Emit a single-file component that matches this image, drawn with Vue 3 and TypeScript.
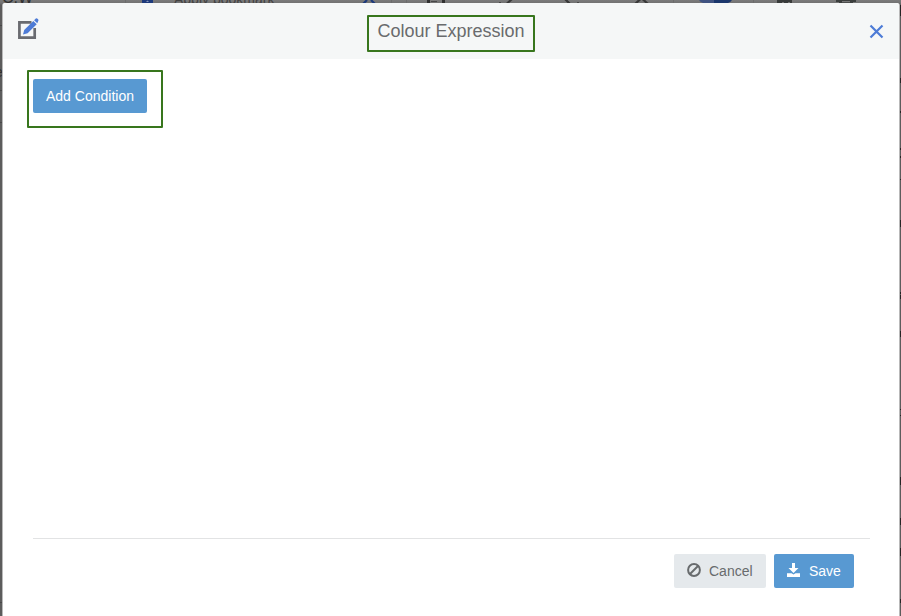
<script setup lang="ts">
interface Mark { y: number; h: number }

const title: string = 'Colour Expression'
const edgeMarks: Mark[] = [
  { y: 5, h: 11 }, { y: 78, h: 5 }, { y: 111, h: 2 }, { y: 148, h: 2 }, { y: 156, h: 2 },
  { y: 179, h: 1 }, { y: 220, h: 7 }, { y: 292, h: 2 }, { y: 295, h: 4 }, { y: 331, h: 6 },
  { y: 409, h: 1 }, { y: 415, h: 1 }, { y: 477, h: 8 }, { y: 518, h: 7 }, { y: 548, h: 8 },
  { y: 599, h: 4 },
]
</script>

<template>
  <div class="screen">
    <div class="behind">
      <svg class="behind-art" width="901" height="616" viewBox="0 0 901 616" fill="none">
        <path d="M125.5 0V3M391.5 0V3M406.5 0V3M673.5 0V3M753.5 0V3" stroke="#6c6c6c" />
        <path d="M142 0H153V3H142Z" fill="#1d3a7c" />
        <path d="M146 2L147.500 0.500L149 2Z" fill="#8794b5" />
        <path d="M363 4L367 0M375 4L371 0" stroke="#1d3a7c" stroke-width="2.200" />
        <path d="M427 0H430V3H427ZM442 0H445V3H442Z" fill="#303030" />
        <path d="M431 1.500H437" stroke="#484848" />
        <path d="M507 3.500L512 -1M565 -1L570 4M635 4L640.500 -1M648 4L642.500 -1" stroke="#383838" stroke-width="2.200" />
        <path d="M499 2.500H501M577 2.500H579" stroke="#484848" />
        <path d="M699 0H714V3H703Q700 2 699 0Z" fill="#405381" />
        <path d="M714 0H732Q731 2 728 3H714Z" fill="#1b376c" />
        <path d="M777 0H792V3H777Z" fill="#383b3a" />
        <path d="M782 2.500H784M788 2.500H790" stroke="#737373" />
        <path d="M836 0H856V2H853V3H850V1H842V3H839V2H836Z" fill="#3b3e3d" />
        <path d="M842 2.500H850" stroke="#4c4e4d" />
        <path d="M0 25.500H2M0 90.500H2M0 122.500H2M0 602.500H2" stroke="#484848" />
        <rect v-for="mark in edgeMarks" :key="mark.y" x="900" :y="mark.y" width="1" :height="mark.h" fill="#252525" />
      </svg>
      <span class="customer">C.W</span>
      <span class="bookmark">Apply bookmark</span>
      <span class="row-label">e</span>
    </div>

    <section class="modal" role="dialog">
      <header class="modal-head">
        <svg class="edit-icon" width="22" height="23" viewBox="0 0 22 23" fill="none">
          <path d="M13.500 5.300H1.400V20.700H16.700V11" stroke="#696b70" stroke-width="2.700" />
          <path d="M5 17.500L6.200 13L15.300 4L18.700 7.300L9.600 16.300Z" fill="#4d7bd6" />
          <path d="M16.100 3.200L17.800 1.600Q18.600 1 19.500 1.700L20.100 2.300Q20.900 3.200 20.200 4.100L19.300 6.300Z" fill="#4d7bd6" />
        </svg>
        <h1 class="title">{{ title }}</h1>
        <button class="close" type="button">
          <svg width="15" height="15" viewBox="0 0 15 15" fill="none">
            <path d="M1.500 1.500L13.500 13.500M13.500 1.500L1.500 13.500" stroke="#4d7bd6" stroke-width="2.200" />
          </svg>
        </button>
      </header>
      <main class="modal-body">
        <div class="condition-box">
          <button class="btn primary add" type="button">Add Condition</button>
        </div>
      </main>
      <footer class="modal-foot">
        <button class="btn cancel" type="button">
          <svg width="14" height="14" viewBox="0 0 14 14" fill="none">
            <circle cx="7" cy="7" r="5.900" stroke="#686b6d" stroke-width="2" />
            <path d="M3 11L11 3" stroke="#686b6d" stroke-width="2" />
          </svg>
          <span>Cancel</span>
        </button>
        <button class="btn primary save" type="button">
          <svg width="14" height="14" viewBox="0 0 14 14" fill="#fff">
            <path d="M5 0H8V5H11.500L6.500 10L1.500 5H5ZM0 10.200H4.500L6.500 11.500L8.500 10.200H13V14H0Z" />
          </svg>
          <span>Save</span>
        </button>
      </footer>
    </section>
  </div>
</template>

<style>
body {
  overflow: hidden;
}
</style>

<style scoped>
.screen {
  position: relative;
  box-sizing: border-box;
  height: 616px;
  padding: 3px 1px 0 2px;
  overflow: hidden;
  background: #767676;
  font-family: "Liberation Sans", Arial, sans-serif;
}
.behind {
  position: absolute;
  inset: 0;
  background: linear-gradient(#7b7b7b 0, #727272 3px, #5c5c5c 5px, #5c5c5c 100%);
  color: #303030;
}
.behind-art {
  display: block;
}
.behind span {
  position: absolute;
  white-space: nowrap;
}
.behind .customer {
  left: 2px;
  top: -11px;
  font-size: 16px;
  line-height: 18px;
}
.behind .bookmark {
  left: 174px;
  top: -9px;
  font-size: 14px;
  line-height: 16px;
  color: #424242;
}
.behind .row-label {
  left: -5px;
  top: 64px;
  font-size: 14px;
  line-height: 16px;
}
.modal {
  position: relative;
  display: flex;
  flex-direction: column;
  box-sizing: border-box;
  height: 613px;
  border: solid #b9b9b9;
  border-width: 0 1px;
  border-radius: 3px 3px 0 0;
  background: #fff;
  overflow: hidden;
}
.modal-head {
  display: grid;
  grid-template-columns: 1fr auto 1fr;
  align-items: start;
  box-sizing: border-box;
  height: 56px;
  padding: 12px 15px 0;
  background: #f5f7f7;
}
.edit-icon {
  margin-top: 2px;
}
.title {
  box-sizing: border-box;
  width: 168px;
  height: 37px;
  margin: 0;
  border: 2px solid #38761d;
  border-radius: 1px;
  color: #696b6d;
  font-size: 18px;
  line-height: 28px;
  font-weight: normal;
  text-align: center;
  white-space: nowrap;
}
.close {
  display: flex;
  justify-self: end;
  margin: 9px 0 0;
  padding: 0;
  border: 0;
  background: none;
}
.modal-body {
  flex: 1;
  padding: 11px 24px 0;
}
.condition-box {
  box-sizing: border-box;
  width: 136px;
  height: 58px;
  padding: 7px 4px;
  border: 2px solid #38761d;
  border-radius: 1px;
}
.btn {
  display: flex;
  align-items: center;
  box-sizing: border-box;
  height: 34px;
  padding: 0 13px;
  border: 0;
  border-radius: 2px;
  font-family: inherit;
  font-size: 14px;
  line-height: 20px;
  white-space: nowrap;
}
.primary {
  background: #5899d2;
  color: #fff;
}
.add {
  width: 114px;
}
.modal-foot {
  display: flex;
  justify-content: flex-end;
  gap: 8px;
  box-sizing: border-box;
  height: 78px;
  margin: 0 29px 0 30px;
  padding: 15px 16px 0;
  border-top: 1px solid #e2e3e4;
}
.modal-foot svg {
  flex: none;
  margin: -2px 8px 0 0;
}
.cancel {
  width: 92px;
  background: #e5e9ec;
  color: #686b6d;
}
.save {
  width: 80px;
}
</style>
